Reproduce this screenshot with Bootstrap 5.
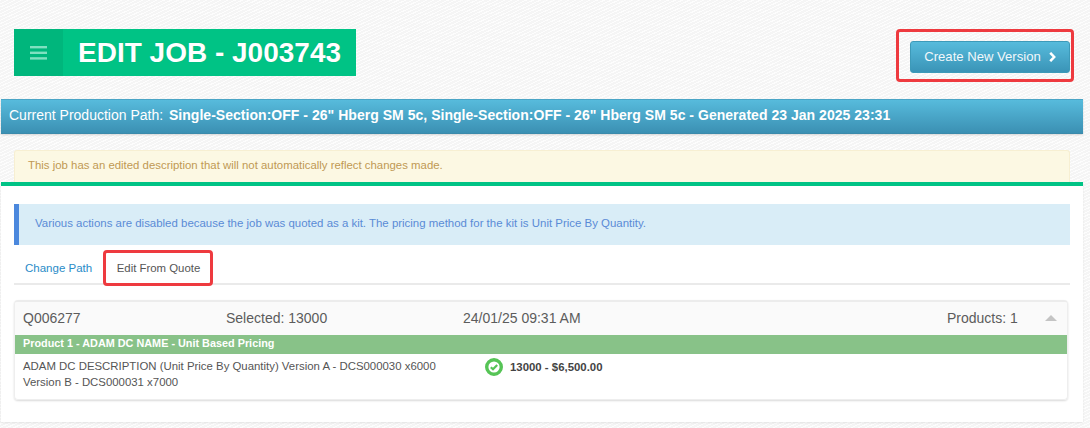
<!DOCTYPE html>
<html lang="en">
<head>
<meta charset="utf-8">
<title>Edit Job</title>
<link href="https://cdn.jsdelivr.net/npm/bootstrap@5.3.0/dist/css/bootstrap.min.css" rel="stylesheet">
<style>
html,body{height:100%}
body{font-family:"Liberation Sans",Arial,sans-serif;font-size:12px;color:#555;overflow:hidden;
background-color:#f5f5f5;background-image:repeating-linear-gradient(155deg,rgba(255,255,255,.8) 0 1px,transparent 1px 3px);}
.top-area{padding:29px 16px 17px 14px;height:99px}
.title-box{height:47px;width:342px;background:#00c385;color:#fff}
.menu-cell{width:49px;background:#00b67c}
.title-text{font-size:28px;font-weight:700;line-height:47px;padding-left:15px;white-space:nowrap;text-shadow:0 0 1px rgba(0,0,0,.15)}
.marked-btn{border:3px solid #ee3a3f;border-radius:4px;width:178px;height:53px;padding:9px 1px 0 11px}
.new-btn{width:160px;height:32px;background:linear-gradient(#57bbdc,#3a94b7);border:1px solid #3d9ab9;border-radius:3px;color:#f2f8fb;font-size:13.1px;line-height:1;padding:0}
.new-btn:hover{color:#fff}
.path-bar{margin-left:1px;width:1082px;height:35px;background:linear-gradient(#57bbdc,#3b90b3);border-top:1px solid #4aa5c6;border-bottom:1px solid #3b8aab;color:#fff;font-size:14px;line-height:31px;padding-left:8px;white-space:nowrap;box-shadow:0 1px 2px rgba(0,0,0,.15)}
.path-bar b{letter-spacing:.03px;margin-left:2px}
.warn-wrap{padding:16px 20px 0 14px}
.warn-note{height:32px;background:#fcf8e3;color:#c09853;border:1px solid #f7efd2;border-bottom:0;border-radius:3px 3px 0 0;line-height:28px;padding-left:13px;font-size:11.4px}
.main-panel{margin-left:1px;width:1082px;height:240px;background:#fff;border-top:4px solid #00c385;padding:18px 14px 0 13px;box-shadow:0 1px 2px rgba(0,0,0,.08)}
.info-note{height:41px;background:#d9edf7;border-left:5px solid #4b88dd;color:#5a8bd6;line-height:39px;padding-left:16px;font-size:11.44px;margin-right:-1px}
.tab-row{height:40px;border-bottom:2px solid #eaeaea;position:relative;margin-right:-1px}
.tab-link{font-size:11.5px;line-height:1;white-space:nowrap;text-decoration:none}
.tab-a{color:#2a8cc8;padding:18px 11px 0 11px}
.tab-b{color:#555;font-size:11.4px;position:absolute;left:89px;top:5px;width:110px;height:36px;border:3px solid #ee3a3f;border-radius:4px;background:#fff;text-align:center;line-height:27px;padding-top:2px;padding-left:1px}
.quote-box{margin-top:15px;width:1054px;height:100px;border:1px solid #eee;border-top:2px solid #ececec;border-radius:4px;box-shadow:0 1px 2px rgba(0,0,0,.15);overflow:hidden}
.quote-head{height:33px;background:#fafafa;font-size:14px;line-height:33px;color:#5c5c5c;padding-left:8px;padding-bottom:1px;position:relative}
.qh-a{width:203px}.qh-b{width:237px}
.qh-c{width:484px}
.caret-up{width:0;height:0;border-left:6px solid transparent;border-right:6px solid transparent;border-bottom:6px solid #c4c4c4;margin-left:27px}
.product-bar{height:19px;background:#88c288;color:#fff;font-weight:700;font-size:10.85px;line-height:17px;padding-left:8px}
.product-body{padding:4px 8px 0;line-height:16px;color:#555;font-size:11.4px}
.prod-desc{width:462px;white-space:nowrap}
.price-cell{font-weight:700;color:#444;font-size:11.4px;line-height:18px}
.check-icon{width:18px;height:18px;margin-right:7px;flex:none}
</style>
</head>
<body>
<div class="top-area d-flex justify-content-between align-items-start">
  <div class="title-box d-flex">
    <div class="menu-cell d-flex align-items-center justify-content-center">
      <svg width="17" height="14" viewBox="0 0 17 14"><g fill="#7fe0c0"><rect y="0" width="17" height="2.4"/><rect y="5.6" width="17" height="2.4"/><rect y="11.2" width="17" height="2.4"/></g></svg>
    </div>
    <div class="title-text">EDIT JOB - J003743</div>
  </div>
  <div class="marked-btn">
    <button type="button" class="btn new-btn d-flex align-items-center justify-content-center gap-2">Create New Version
      <svg width="7" height="10" viewBox="0 0 7 10"><path d="M1.200 .8 5.200 5 1.200 9.200" fill="none" stroke="#fff" stroke-width="2.500"/></svg>
    </button>
  </div>
</div>
<div class="path-bar">Current Production Path: <b>Single-Section:OFF - 26" Hberg SM 5c, Single-Section:OFF - 26" Hberg SM 5c - Generated 23 Jan 2025 23:31</b></div>
<div class="warn-wrap"><div class="warn-note">This job has an edited description that will not automatically reflect changes made.</div></div>
<div class="main-panel">
  <div class="info-note">Various actions are disabled because the job was quoted as a kit. The pricing method for the kit is Unit Price By Quantity.</div>
  <div class="tab-row d-flex">
    <a class="tab-link tab-a" href="#">Change Path</a>
    <a class="tab-link tab-b" href="#">Edit From Quote</a>
  </div>
  <div class="quote-box">
    <div class="quote-head d-flex align-items-center">
      <div class="qh-a">Q006277</div>
      <div class="qh-b">Selected: 13000</div>
      <div class="qh-c">24/01/25 09:31 AM</div>
      <div>Products: 1</div>
      <div class="caret-up"></div>
    </div>
    <div class="product-bar">Product 1 - ADAM DC NAME - Unit Based Pricing</div>
    <div class="product-body d-flex">
      <div class="prod-desc">ADAM DC DESCRIPTION (Unit Price By Quantity) Version A - DCS000030 x6000<br>Version B - DCS000031 x7000</div>
      <div class="price-cell d-flex align-items-start">
        <svg class="check-icon" viewBox="0 0 18 18"><circle cx="9" cy="9" r="7.300" fill="#fff" stroke="#56c456" stroke-width="3.400"/><path d="M5.800 9.200 8 11.300 12.200 7" fill="none" stroke="#56c456" stroke-width="2.200"/></svg>
        <span>13000 - $6,500.00</span>
      </div>
    </div>
  </div>
</div>
<script src="https://cdn.jsdelivr.net/npm/bootstrap@5.3.0/dist/js/bootstrap.bundle.min.js"></script>
</body>
</html>
